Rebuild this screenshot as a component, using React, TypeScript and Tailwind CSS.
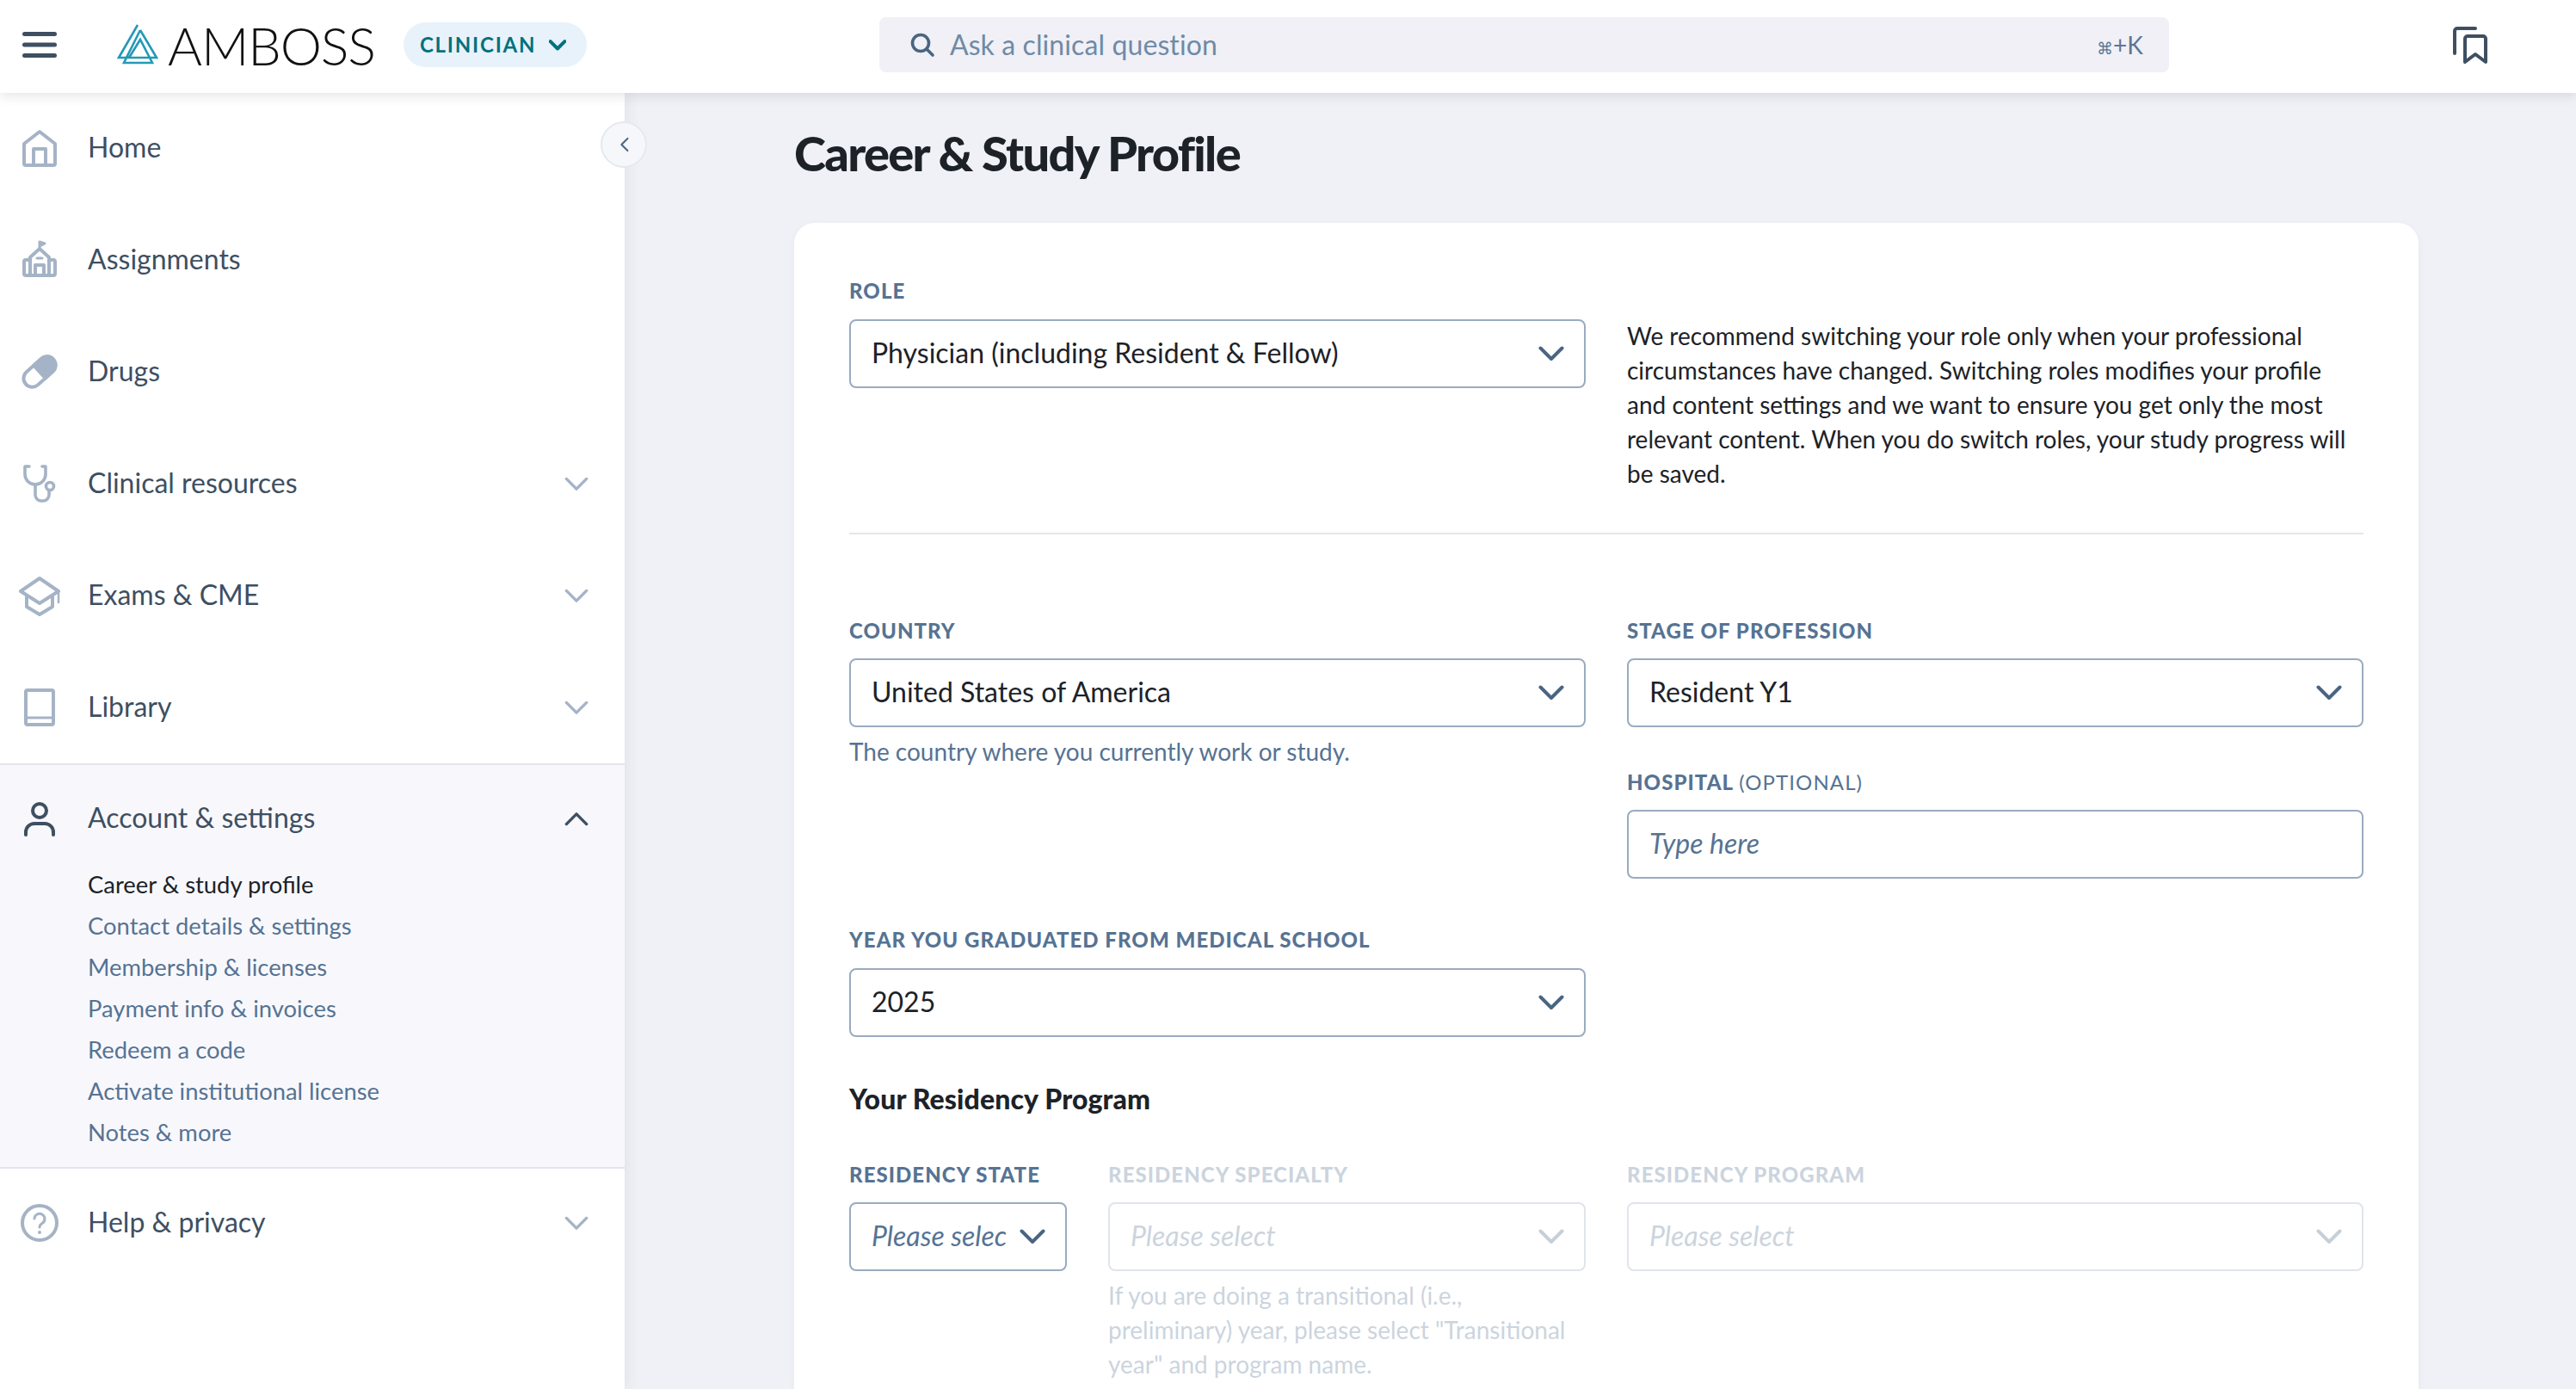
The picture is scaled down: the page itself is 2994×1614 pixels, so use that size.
import React from "react";

const Chevron = ({ className = "", up = false, sw = 4 }: { className?: string; up?: boolean; sw?: number }) => (
  <svg viewBox="0 0 30 18" fill="none" className={className}>
    <path
      d={up ? "M2.5 15.5 L15 3 L27.5 15.5" : "M2.5 2.5 L15 15 L27.5 2.5"}
      stroke="currentColor"
      strokeWidth={sw}
      strokeLinecap="round"
      strokeLinejoin="round"
    />
  </svg>
);

const svgBase = { viewBox: "0 0 48 48", fill: "none", stroke: "currentColor", strokeWidth: 4, strokeLinecap: "round" as const, strokeLinejoin: "round" as const };

const HomeIcon = () => (
  <svg {...svgBase} className="w-12 h-12">
    <path d="M6 18 L24 4 L42 18 V41 a2 2 0 0 1-2 2 H8 a2 2 0 0 1-2-2 Z" />
    <path d="M17 43 V24 H31 V43" />
  </svg>
);
const AssignIcon = () => (
  <svg {...svgBase} className="w-12 h-12">
    <path d="M24 11 V3 L30 5 L24 8" strokeWidth="3" />
    <path d="M13 21 L24 11 L35 21 V42 H13 Z" />
    <path d="M13 24 H8 a2 2 0 0 0-2 2 V40 a2 2 0 0 0 2 2 H40 a2 2 0 0 0 2-2 V26 a2 2 0 0 0-2-2 H35" />
    <path d="M19 42 V30 H29 V42" />
    <path d="M21 22 H27" strokeWidth="3" />
  </svg>
);
const PillIcon = () => (
  <svg viewBox="0 0 48 48" className="w-12 h-12" fill="none">
    <g transform="rotate(-42 24 24)">
      <rect x="2.5" y="14" width="43" height="20" rx="10" stroke="currentColor" strokeWidth="4" />
      <path d="M24 14 H35.5 a10 10 0 0 1 0 20 H24 Z" fill="currentColor" stroke="currentColor" strokeWidth="4" strokeLinejoin="round" />
    </g>
  </svg>
);
const StethIcon = () => (
  <svg {...svgBase} className="w-12 h-12">
    <path d="M12 4 H7 V13 a12 12 0 0 0 24 0 V4 H27" strokeWidth="3.6" />
    <path d="M19 25 V37 a7 7 0 0 0 7 7 h2 a7 7 0 0 0 7-7 V33" strokeWidth="3.6" />
    <circle cx="36" cy="27" r="4.5" strokeWidth="3.6" />
  </svg>
);
const CapIcon = () => (
  <svg {...svgBase} className="w-12 h-12">
    <path d="M24 4 L2 19 L24 33 L46 19 Z" />
    <path d="M9 25 V37 L24 46 L39 37 V25" />
    <path d="M46 19 V32" strokeWidth="2.5" />
  </svg>
);
const BookIcon = () => (
  <svg {...svgBase} className="w-12 h-12">
    <rect x="8" y="4" width="32" height="40" rx="2" />
    <path d="M8 36 H40" strokeWidth="3" />
  </svg>
);
const PersonIcon = () => (
  <svg {...svgBase} className="w-12 h-12">
    <circle cx="24" cy="15" r="8" />
    <path d="M8 43 V40 a10 10 0 0 1 10-10 h12 a10 10 0 0 1 10 10 v3" />
  </svg>
);
const HelpIcon = () => (
  <svg {...svgBase} className="w-12 h-12">
    <circle cx="24" cy="24" r="20" />
    <path d="M18 19 a6 6 0 1 1 9 5.5 c-2 1.2-3 2-3 4.5" strokeWidth="3" />
    <circle cx="24" cy="35" r="1.2" fill="currentColor" strokeWidth="1.5" />
  </svg>
);

const NavRow = ({
  icon,
  label,
  chevron,
  h,
  active,
}: {
  icon: React.ReactNode;
  label: string;
  chevron?: boolean;
  h: string;
  active?: boolean;
}) => (
  <div className={`flex items-center pl-[22px] pr-[42px] shrink-0 ${h}`}>
    <span className={`w-12 h-12 shrink-0 ${active ? "text-[#3e4f62]" : "text-[#a5b3c6]"}`}>{icon}</span>
    <span className="ml-[32px] pb-[3px] text-[32px] leading-[40px] text-[#3e4f62] flex-1">{label}</span>
    {chevron && (
      <Chevron up={active} sw={3.6} className={`w-[28px] h-[17px] ${active ? "text-[#3e4f62]" : "text-[#a5b3c6]"}`} />
    )}
  </div>
);

const Label = ({ children, className = "" }: { children: React.ReactNode; className?: string }) => (
  <div className={`h-8 leading-8 text-[24px] font-black tracking-[1.05px] uppercase text-[#567393] whitespace-nowrap ${className}`}>
    {children}
  </div>
);

const Select = ({
  value,
  placeholder,
  className = "",
}: {
  value?: string;
  placeholder?: string;
  className?: string;
}) => (
  <div className={`h-20 border-2 border-[#9aabc0] rounded-lg flex items-center pl-6 pr-[23px] gap-4 bg-white ${className}`}>
    <span
      className={`flex-1 min-w-0 pb-[2px] overflow-hidden whitespace-nowrap text-[32px] ${
        placeholder ? "italic text-[#567393]" : "text-[#1c2228]"
      }`}
    >
      {value ?? placeholder}
    </span>
    <Chevron className="w-[30px] h-[18px] shrink-0 text-[#4a6582]" />
  </div>
);

export default function App() {
  return (
    <div className="[font-family:Lato,sans-serif] w-[2994px] h-[1614px] overflow-hidden relative bg-[#f0f1f6] flex flex-col">
      <header className="h-[108px] shrink-0 bg-white flex items-center pb-1 relative z-20 shadow-[0_4px_12px_rgba(40,50,70,0.12)]">
        <svg viewBox="0 0 40 30" className="w-10 h-[30px] ml-[26px] text-[#3e4f62] shrink-0" fill="none" stroke="currentColor" strokeWidth="5" strokeLinecap="round">
          <path d="M2.5 2.5 H37.5 M2.5 15 H37.5 M2.5 27.5 H37.5" />
        </svg>
        <svg viewBox="12 17 50 52" className="w-[50px] h-[52px] ml-[69px] shrink-0 text-[#2499b7]" fill="none" stroke="currentColor" strokeWidth="2.6">
          <path d="M37 20 L15 58 H59 L40 26" />
          <path d="M40 26 L21 64 H54 L40 37 L27 58" />
        </svg>
        <span className="ml-[10px] text-[61px] leading-none font-light text-[#111] tracking-[-1.1px]">AMBOSS</span>
        <div className="ml-[33px] w-[213px] h-[52px] rounded-full bg-[#e8f2fb] flex items-center pl-[19px] shrink-0">
          <span className="text-[24px] font-bold tracking-[1.8px] text-[#02717e]">CLINICIAN</span>
          <Chevron sw={6} className="ml-[15px] w-[20px] h-[13px] text-[#02717e]" />
        </div>
        <div className="ml-[340px] w-[1499px] h-[64px] rounded-lg bg-[#f0f0f6] flex items-center shrink-0 pl-[35px] pr-[30px]">
          <svg viewBox="0 0 30 30" className="w-[30px] h-[30px] text-[#4a6582] shrink-0" fill="none" stroke="currentColor" strokeWidth="3.6" strokeLinecap="round">
            <circle cx="13" cy="13" r="9.5" />
            <path d="M20 20 L27 27" />
          </svg>
          <span className="ml-[17px] text-[32px] tracking-[0.1px] text-[#6f8aa6] flex-1">Ask a clinical question</span>
          <span className="text-[28px] text-[#5a7795]">
            <span className="text-[19px]">⌘</span>+K
          </span>
        </div>
        <svg viewBox="0 0 48 48" className="w-12 h-12 ml-[326px] text-[#3e4f62] shrink-0" fill="none" stroke="currentColor" strokeWidth="4" strokeLinecap="round" strokeLinejoin="round">
          <path d="M6 34 V8 a3 3 0 0 1 3-3 H30" />
          <path d="M18 44 V17 a3 3 0 0 1 3-3 H39 a3 3 0 0 1 3 3 V44 L30 35 Z" />
        </svg>
      </header>

      <div className="flex flex-1 min-h-0">
        <aside className="w-[726px] shrink-0 bg-white flex flex-col relative z-10 shadow-[4px_0_14px_rgba(40,50,70,0.07)]">
          <NavRow icon={<HomeIcon />} label="Home" h="h-[129px]" />
          <NavRow icon={<AssignIcon />} label="Assignments" h="h-[130px]" />
          <NavRow icon={<PillIcon />} label="Drugs" h="h-[130px]" />
          <NavRow icon={<StethIcon />} label="Clinical resources" chevron h="h-[130px]" />
          <NavRow icon={<CapIcon />} label="Exams & CME" chevron h="h-[130px]" />
          <NavRow icon={<BookIcon />} label="Library" chevron h="h-[130px]" />
          <div className="border-y-2 border-[#e2e5ee] bg-[#f8f8fc] h-[471px] shrink-0 pt-1">
            <NavRow icon={<PersonIcon />} label="Account & settings" chevron active h="h-[116px]" />
            <div className="pl-[102px] -mt-[5px] text-[27.4px] text-[#567393]">
              <div className="h-12 leading-[48px] text-[#1c2228]">Career &amp; study profile</div>
              <div className="h-12 leading-[48px]">Contact details &amp; settings</div>
              <div className="h-12 leading-[48px]">Membership &amp; licenses</div>
              <div className="h-12 leading-[48px]">Payment info &amp; invoices</div>
              <div className="h-12 leading-[48px]">Redeem a code</div>
              <div className="h-12 leading-[48px]">Activate institutional license</div>
              <div className="h-12 leading-[48px]">Notes &amp; more</div>
            </div>
          </div>
          <NavRow icon={<HelpIcon />} label="Help & privacy" chevron h="h-[126px]" />
          <button className="absolute left-[698px] top-[33px] w-[54px] h-[54px] rounded-full bg-[#f6f7fb] border-2 border-[#e6e8f0] flex items-center justify-center text-[#4a6582]">
            <svg viewBox="0 0 14 22" className="w-[11px] h-[18px]" fill="none" stroke="currentColor" strokeWidth="2.6" strokeLinecap="round" strokeLinejoin="round">
              <path d="M12 2 L3 11 L12 20" />
            </svg>
          </button>
        </aside>

        <main className="flex-1 min-w-0 pl-[197px] pt-[38px]">
          <h1 className="h-16 leading-[64px] text-[56px] font-black text-[#1c2228] tracking-[-1.7px]">Career &amp; Study Profile</h1>
          <section className="mt-[49px] w-[1888px] bg-white rounded-3xl px-16 pt-[63px] pb-16 shadow-[0_2px_10px_rgba(40,50,70,0.04)]">
            <Label>Role</Label>
            <div className="grid grid-cols-2 gap-x-12 mt-[17px]">
              <Select value="Physician (including Resident & Fellow)" />
              <p className="text-[28px] leading-10 text-[#1c2228] -translate-y-px">
                We recommend switching your role only when your professional circumstances have changed. Switching roles
                modifies your profile and content settings and we want to ensure you get only the most relevant content.
                When you do switch roles, your study progress will be saved.
              </p>
            </div>
            <div className="h-0.5 bg-[#e2e6ec] mt-12" />

            <div className="grid grid-cols-2 gap-x-12 mt-24">
              <div>
                <Label>Country</Label>
                <Select value="United States of America" className="mt-4" />
                <p className="mt-2 text-[28px] leading-10 text-[#567393]">The country where you currently work or study.</p>
              </div>
              <div>
                <Label>Stage of profession</Label>
                <Select value="Resident Y1" className="mt-4" />
                <Label className="mt-12">
                  Hospital <span className="font-normal tracking-[1.1px]">(optional)</span>
                </Label>
                <div className="mt-4 h-20 border-2 border-[#9aabc0] rounded-lg flex items-center pl-6 pb-[2px] text-[32px] italic text-[#567393]">
                  Type here
                </div>
              </div>
            </div>

            <Label className="mt-[55px]">Year you graduated from medical school</Label>
            <Select value="2025" className="mt-[17px] w-[856px]" />

            <h2 className="mt-[52px] h-10 leading-10 text-[32px] font-black tracking-[0.13px] text-[#1c2228]">Your Residency Program</h2>

            <div className="mt-[52px] grid grid-cols-[253px_555px_856px] gap-x-12">
              <div>
                <Label>Residency state</Label>
                <Select placeholder="Please select" className="mt-4" />
              </div>
              <div className="opacity-30">
                <Label>Residency specialty</Label>
                <Select placeholder="Please select" className="mt-4" />
                <p className="mt-2 text-[28px] leading-10 text-[#567393]">
                  If you are doing a transitional (i.e., preliminary) year, please select "Transitional year" and program name.
                </p>
              </div>
              <div className="opacity-30">
                <Label>Residency program</Label>
                <Select placeholder="Please select" className="mt-4" />
              </div>
            </div>
          </section>
        </main>
      </div>
    </div>
  );
}
